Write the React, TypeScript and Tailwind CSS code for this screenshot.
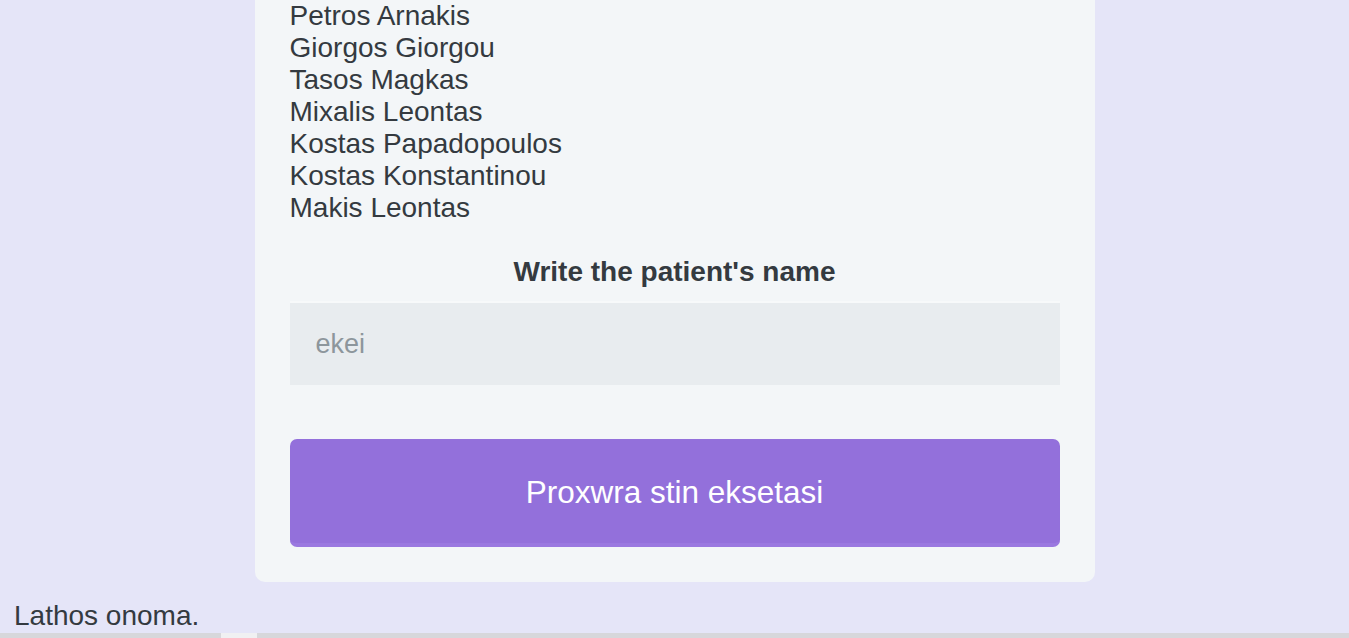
import React from "react";

const names = [
  "Petros Arnakis",
  "Giorgos Giorgou",
  "Tasos Magkas",
  "Mixalis Leontas",
  "Kostas Papadopoulos",
  "Kostas Konstantinou",
  "Makis Leontas",
];

export default function App() {
  return (
    <div
      className="h-[638px] w-full overflow-hidden bg-[#e5e5f8] flex flex-col text-[#343a40]"
      style={{ fontFamily: '"Liberation Sans", Arial, sans-serif' }}
    >
      <div className="flex justify-center">
        <div className="w-[840px] bg-[#f3f6f8] rounded-b-[10px] px-[35px] pb-[35px] flex flex-col">
          <div className="flex flex-col text-[28px] leading-[32px]">
            {names.map((n) => (
              <div key={n}>{n}</div>
            ))}
          </div>
          <div className="mt-[32px] text-center font-bold text-[28px] leading-[32px]">
            Write the patient's name
          </div>
          <div className="mt-[13px] h-[84px] bg-[#e8ecef] border-t-2 border-[#f7f9fa] flex items-center px-[26px] text-[27px] text-[#8d969c]">
            ekei
          </div>
          <div className="mt-[54px] h-[108px] rounded-[7px] bg-[#9370db] border-b-[4px] border-[#9a78e0] pt-[4px] flex items-center justify-center text-white text-[31.5px]">
            Proxwra stin eksetasi
          </div>
        </div>
      </div>
      <div className="mt-[17px] pl-[14px] text-[28px] leading-[34px] text-[#343a40]">
        Lathos onoma.
      </div>
      <div className="mt-auto h-[6px] bg-[#d7d7db] flex">
        <div className="ml-[221px] w-[36px] bg-[#f0f0f2]" />
      </div>
    </div>
  );
}
